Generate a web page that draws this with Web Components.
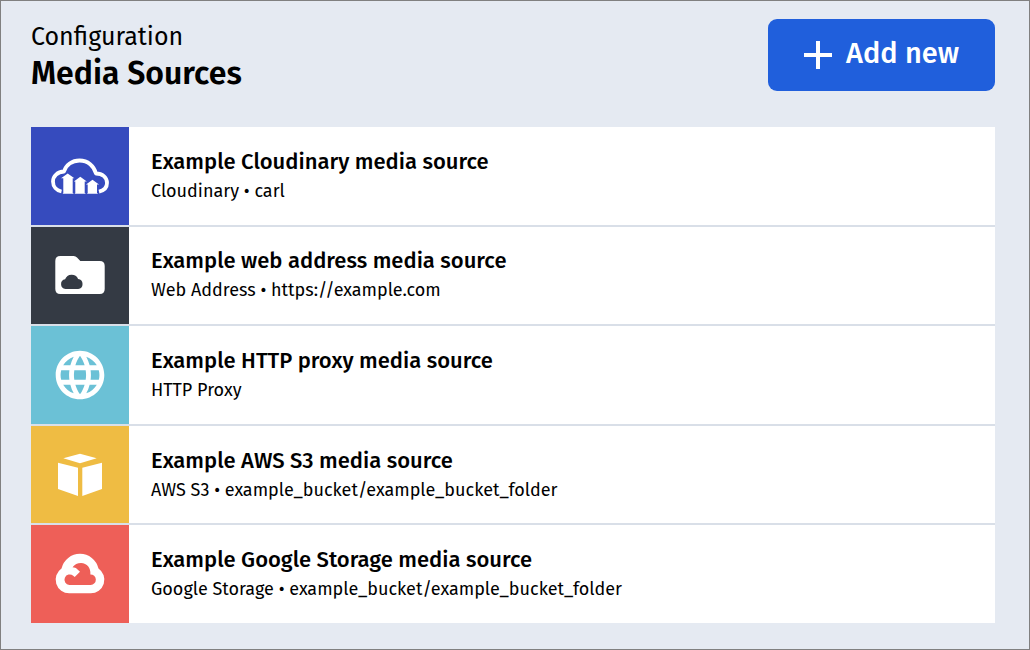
<!DOCTYPE html>
<html lang="en">
<head>
<meta charset="utf-8">
<meta name="viewport" content="width=device-width, initial-scale=1">
<title>Media Sources</title>
<style>
  body { box-sizing: border-box; min-height: 100vh; margin: 0; display: grid; border: 1px solid #808080;
    background: #e5eaf2; color: #000; font-family: "Fira Sans", "Noto Sans", sans-serif; }
</style>
</head>
<body>
<media-sources-page>
  <page-header slot="header">
    <span slot="section">Configuration</span>
    <span slot="title">Media Sources</span>
    <add-button slot="action">Add new</add-button>
  </page-header>
  <media-source type="cloudinary">
    <span slot="name">Example Cloudinary media source</span>
    <span slot="detail">Cloudinary • carl</span>
  </media-source>
  <media-source type="web">
    <span slot="name">Example web address media source</span>
    <span slot="detail">Web Address • https://example.com</span>
  </media-source>
  <media-source type="proxy">
    <span slot="name">Example HTTP proxy media source</span>
    <span slot="detail">HTTP Proxy</span>
  </media-source>
  <media-source type="s3">
    <span slot="name">Example AWS S3 media source</span>
    <span slot="detail">AWS S3 • example_bucket/example_bucket_folder</span>
  </media-source>
  <media-source type="google">
    <span slot="name">Example Google Storage media source</span>
    <span slot="detail">Google Storage • example_bucket/example_bucket_folder</span>
  </media-source>
</media-sources-page>

<script>
const define = (name, markup) => customElements.define(name, class extends HTMLElement {
  constructor() {
    super();
    this.attachShadow({ mode: 'open' }).innerHTML = markup;
  }
});

define('media-sources-page', `
  <style>
    :host { display: flex; flex-direction: column; gap: 36px; padding: 18px 34px 26px 30px; }
    .list { flex: 1; display: grid; grid-auto-rows: minmax(88px, 1fr); gap: 2px; background: #d9dfe8; }
  </style>
  <slot name="header"></slot>
  <div class="list" role="list"><slot></slot></div>
`);

define('page-header', `
  <style>
    :host { display: flex; justify-content: space-between; align-items: flex-start; }
    .section, h1 { margin: 0; line-height: 36px; }
    .section { font-size: 25px; }
    h1 { font-size: 32px; font-weight: 600; }
  </style>
  <header>
    <p class="section"><slot name="section"></slot></p>
    <h1><slot name="title"></slot></h1>
  </header>
  <slot name="action"></slot>
`);

define('add-button', `
  <style>
    :host { display: block; }
    button { display: flex; align-items: center; gap: 14px; height: 72px; padding: 0 36px; border: 0;
      border-radius: 9px; background: #205fdc; color: #fff; font-family: inherit;
      font-size: 29px; font-weight: 500; line-height: 36px; cursor: pointer; }
    .label { padding-bottom: 2px; }
    svg { width: 28px; height: 28px; }
  </style>
  <button type="button">
    <svg viewBox="0 0 28 28" aria-hidden="true"><path d="M0 14h28M14 0v28" stroke="#fff" stroke-width="4"/></svg>
    <span class="label"><slot></slot></span>
  </button>
`);

const sources = {
  cloudinary: { color: '#364bbe', icon: `
    <path d="M30.500 64.500C25.500 63.500 22 59.500 22 54.500C22 49 26.500 44.800 33 44.500C35 38 41 33.500 48.500 33.500C57 33.500 63 39 65 46.500C71.500 46.500 76 50.500 76 56C76 60.500 73 63.500 68 64.700" fill="none" stroke="#fff" stroke-width="3.800" stroke-linejoin="round"/>
    <path d="M36.700 46.500l6.700 4.700h-1.700V66l1.300.8H31.500l.8-.8V51.200h-2.300zM49.300 49.800l6.500 4.700h-2.100V66l1.300.8H43.500l.8-.8V54.500h-1.500zM61.500 52.800l6.500 4.700h-2V66l1.300.8H55.900l.8-.8V57.500h-1.700z" fill="#fff"/>` },
  web: { color: '#343a44', icon: `
    <path d="M29.300 30h13.400q2 0 3.300 1.500L49.300 35h19.400q5 0 5 5v23q0 5-5 5H29.300q-5 0-5-5V35q0-5 5-5z" fill="#fff"/>
    <path d="M34.500 63a4.900 4.900 0 0 1-.4-9.700a7 7 0 0 1 13-.4a5.100 5.100 0 0 1 .1 10.100z" fill="#343a44"/>` },
  proxy: { color: '#6bc1d6', icon: `
    <path transform="translate(19.840 19.840) scale(2.430)" fill="#fff" d="M11.990 2C6.470 2 2 6.480 2 12s4.470 10 9.990 10C17.520 22 22 17.520 22 12S17.520 2 11.990 2zm6.930 6h-2.950c-.32-1.250-.78-2.450-1.380-3.560 1.840.63 3.370 1.910 4.330 3.560zM12 4.040c.83 1.200 1.480 2.530 1.910 3.960h-3.820c.43-1.430 1.080-2.760 1.910-3.960zM4.260 14C4.100 13.360 4 12.690 4 12s.1-1.360.26-2h3.380c-.08.66-.14 1.320-.14 2 0 .68.06 1.340.14 2H4.260zm.82 2h2.950c.32 1.250.78 2.450 1.380 3.560-1.840-.63-3.370-1.900-4.330-3.560zm2.950-8H5.080c.96-1.660 2.490-2.930 4.330-3.560C8.810 5.550 8.350 6.750 8.030 8zM12 19.960c-.83-1.200-1.480-2.530-1.910-3.960h3.820c-.43 1.430-1.080 2.760-1.910 3.960zM14.340 14H9.660c-.09-.66-.16-1.320-.16-2 0-.68.07-1.350.16-2h4.680c.09.65.16 1.320.16 2 0 .68-.07 1.340-.16 2zm.25 5.560c.6-1.110 1.060-2.310 1.380-3.560h2.950c-.96 1.650-2.490 2.930-4.330 3.560zM16.360 14c.08-.66.14-1.320.14-2 0-.68-.06-1.340-.14-2h3.380c.16.64.26 1.310.26 2s-.1 1.360-.26 2h-3.380z"/>` },
  s3: { color: '#efbc43', icon: `
    <path d="M49 27.700l16.700 4.600L49 37.300l-16.700-5zM27 36.700l20 5V70l-20-7zM71 36.700l-19.700 5V70L71 63z" fill="#fff"/>` },
  google: { color: '#ee5f58', icon: `
    <path fill="#fff" fill-rule="evenodd" d="M38.300 68.300A13.600 13.600 0 0 1 30.500 43.500A19 19 0 0 1 67.500 43.500A13.600 13.600 0 0 1 59.700 68.300z
      M38.300 60H59.700A5.300 5.300 0 0 0 59.400 49.400C60 43 56 38 50 38C46.500 38 43.500 39.500 41.500 42.200C43.500 42.200 45 43 46 43.900L49 46.800L43.700 52.100L42.200 50.700A5.300 5.300 0 1 0 38.300 60z"/>` },
};

class MediaSource extends HTMLElement {
  constructor() {
    super();
    this.attachShadow({ mode: 'open' });
  }
  connectedCallback() {
    const { color, icon } = sources[this.getAttribute('type')];
    this.setAttribute('role', 'listitem');
    this.shadowRoot.innerHTML = `
      <style>
        :host { display: flex; background: #fff; }
        .tile { flex: none; display: flex; align-items: center; justify-content: center; width: 98px; background: ${color}; }
        svg { width: 60px; height: 60px; }
        .text { display: flex; flex-direction: column; justify-content: center; padding: 0 22px; }
        h2, p { margin: 0; }
        h2 { font-size: 22px; font-weight: 500; line-height: 30px; }
        p { font-size: 18px; line-height: 28px; }
      </style>
      <div class="tile"><svg viewBox="19 19 60 60" aria-hidden="true">${icon}</svg></div>
      <div class="text">
        <h2><slot name="name"></slot></h2>
        <p><slot name="detail"></slot></p>
      </div>`;
  }
}
customElements.define('media-source', MediaSource);
</script>
</body>
</html>
